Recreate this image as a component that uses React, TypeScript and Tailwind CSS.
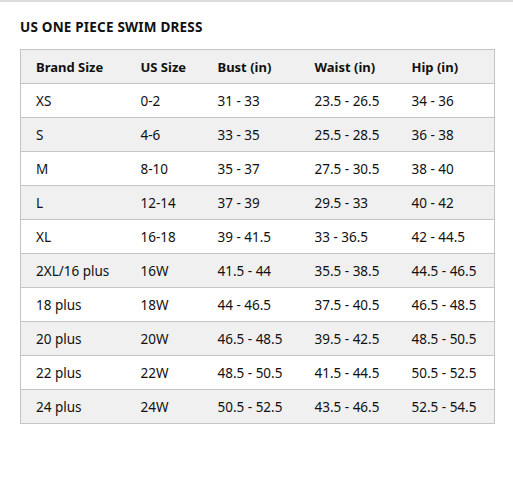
const headers = ["Brand Size", "US Size", "Bust (in)", "Waist (in)", "Hip (in)"];

const rows: string[][] = [
  ["XS", "0-2", "31 - 33", "23.5 - 26.5", "34 - 36"],
  ["S", "4-6", "33 - 35", "25.5 - 28.5", "36 - 38"],
  ["M", "8-10", "35 - 37", "27.5 - 30.5", "38 - 40"],
  ["L", "12-14", "37 - 39", "29.5 - 33", "40 - 42"],
  ["XL", "16-18", "39 - 41.5", "33 - 36.5", "42 - 44.5"],
  ["2XL/16 plus", "16W", "41.5 - 44", "35.5 - 38.5", "44.5 - 46.5"],
  ["18 plus", "18W", "44 - 46.5", "37.5 - 40.5", "46.5 - 48.5"],
  ["20 plus", "20W", "46.5 - 48.5", "39.5 - 42.5", "48.5 - 50.5"],
  ["22 plus", "22W", "48.5 - 50.5", "41.5 - 44.5", "50.5 - 52.5"],
  ["24 plus", "24W", "50.5 - 52.5", "43.5 - 46.5", "52.5 - 54.5"],
];

// first column carries the left padding, the rest start flush
const colWidths = ["w-[120px]", "w-[77px]", "w-[97px]", "w-[97px]", "w-[83px]"];

export default function App() {
  return (
    <div
      className="w-[513px] h-[477px] bg-white border-t-2 border-[#dcdcdc] text-[#111]"
      style={{ fontFamily: '"Noto Sans", "Open Sans", sans-serif' }}
    >
      <h2 className="pl-[20px] pt-[16px] text-[13.5px] font-bold leading-[18px] tracking-[0.2px]">
        US ONE PIECE SWIM DRESS
      </h2>
      <table className="ml-[20px] mt-[13px] w-[474px] table-fixed border-collapse border border-[#c4c4c4] text-[13.5px] leading-[18px]">
        <colgroup>
          {colWidths.map((w, i) => (
            <col key={i} className={w} />
          ))}
        </colgroup>
        <thead>
          <tr className="bg-[#f0f0f0] h-[34px]">
            {headers.map((h, i) => (
              <th
                key={h}
                className={`${i === 0 ? "pl-[15px]" : "pl-0"} text-left text-[13px] font-bold border-b border-[#c4c4c4]`}
              >
                {h}
              </th>
            ))}
          </tr>
        </thead>
        <tbody>
          {rows.map((r, ri) => (
            <tr
              key={r[0]}
              className={`h-[34px] border-b border-[#c4c4c4] ${ri % 2 === 1 ? "bg-[#f0f0f0]" : "bg-white"}`}
            >
              {r.map((c, ci) => (
                <td key={ci} className={`whitespace-nowrap ${ci === 0 ? "pl-[15px]" : "pl-0"}`}>
                  {c}
                </td>
              ))}
            </tr>
          ))}
        </tbody>
      </table>
    </div>
  );
}
